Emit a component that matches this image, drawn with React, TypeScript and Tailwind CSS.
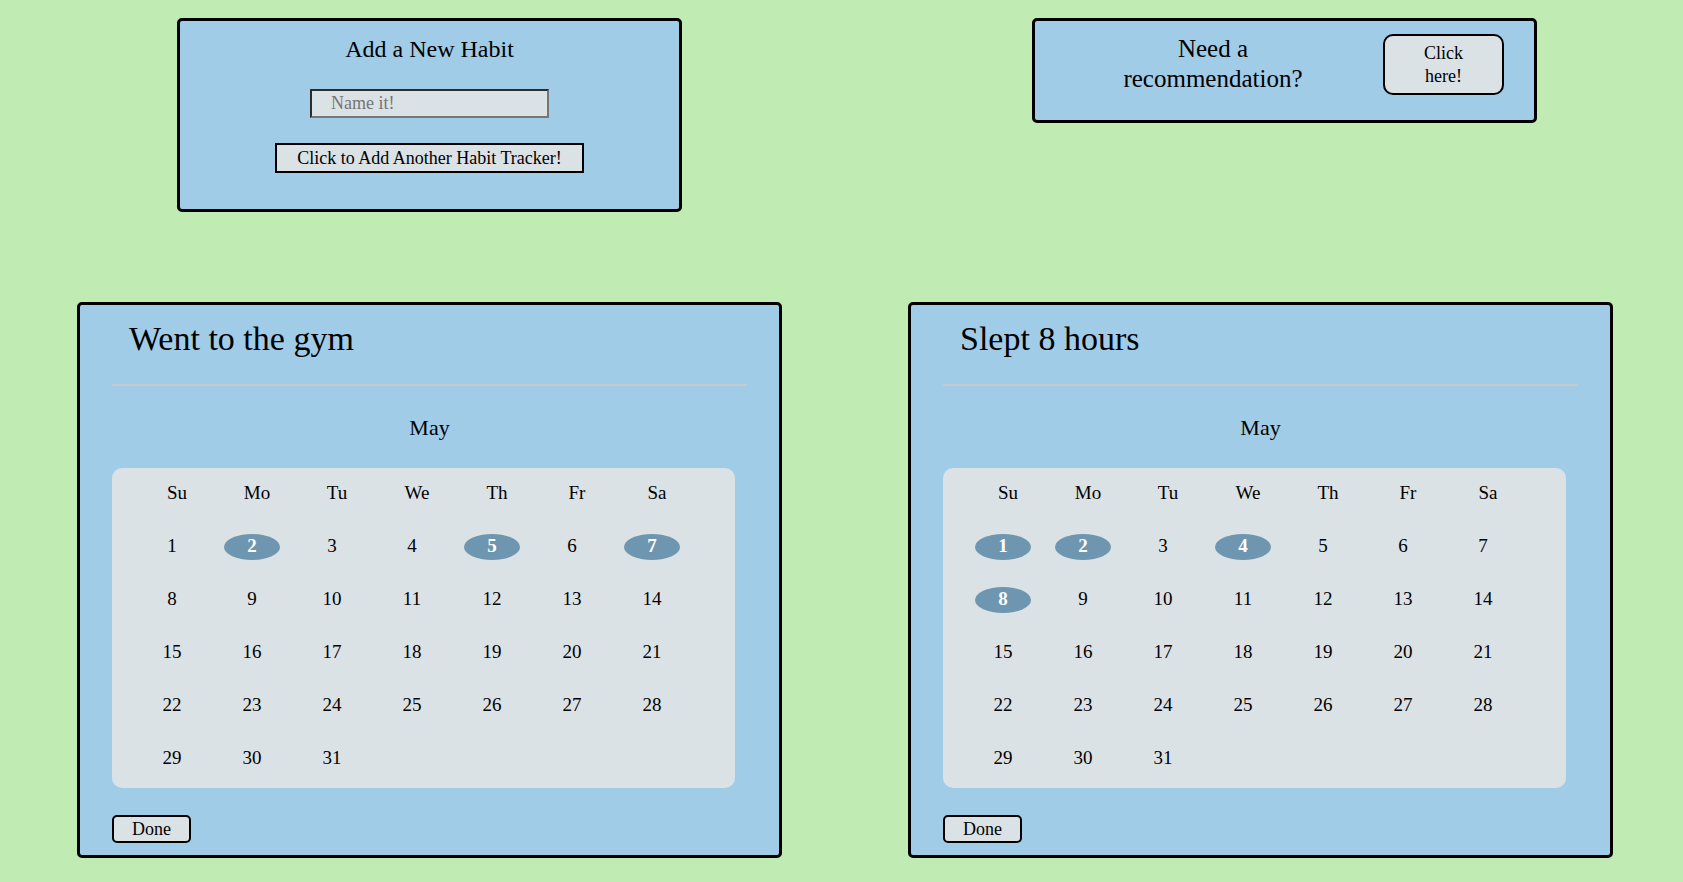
import React from "react";

type Habit = { title: string; done: number[] };

const habits: Habit[] = [
  { title: "Went to the gym", done: [2, 5, 7] },
  { title: "Slept 8 hours", done: [1, 2, 4, 8] },
];

const weekdays = ["Su", "Mo", "Tu", "We", "Th", "Fr", "Sa"];

function MonthGrid({ done }: { done: number[] }) {
  const days = Array.from({ length: 31 }, (_, i) => i + 1);
  return (
    <div className="ml-0 w-[623px] rounded-[10px] bg-[#dbe2e6] pl-[20px] pt-[11px] pb-[3px]">
      <div className="grid grid-cols-[repeat(7,80px)]">
        {weekdays.map((d) => (
          <div
            key={d}
            className="flex h-[28px] items-center justify-center pl-[10px] text-[19px]"
          >
            {d}
          </div>
        ))}
      </div>
      <div className="mt-[13px] grid grid-cols-[repeat(7,80px)]">
        {days.map((n) => {
          const on = done.includes(n);
          return (
            <div key={n} className="flex h-[53px] items-center justify-center">
              {on ? (
                <span className="flex h-[26px] w-[56px] items-center justify-center rounded-[50%] bg-[#6f96b0] text-[19px] font-bold text-white">
                  {n}
                </span>
              ) : (
                <span className="text-[19px]">{n}</span>
              )}
            </div>
          );
        })}
      </div>
    </div>
  );
}

function HabitCard({ habit }: { habit: Habit }) {
  return (
    <div className="flex h-[556px] w-[705px] flex-col rounded-[5px] border-[3px] border-black bg-[#a0cce8] px-[32px] pt-[14px]">
      <h2 className="pl-[17px] text-[34px] leading-[40px]">{habit.title}</h2>
      <div className="mt-[25px] h-[2px] bg-[#c4cace]"></div>
      <div className="mt-[28px] text-center text-[22px] leading-[28px]">May</div>
      <div className="mt-[26px]">
        <MonthGrid done={habit.done} />
      </div>
      <div className="mt-[27px]">
        <button className="h-[28px] w-[79px] rounded-[5px] border-2 border-black bg-[#dbe2e6] text-[18px] leading-none">
          Done
        </button>
      </div>
    </div>
  );
}

export default function App() {
  return (
    <div className="min-h-[882px] w-full bg-[#c0ebb2] font-['Liberation_Serif',serif] text-black">
      <div className="flex items-start pt-[18px]">
        <div className="ml-[177px] flex h-[194px] w-[505px] flex-col items-center rounded-[5px] border-[3px] border-black bg-[#a0cce8] pt-[13px]">
          <h1 className="text-[24px] leading-[30px]">Add a New Habit</h1>
          <input
            placeholder="Name it!"
            className="mt-[25px] h-[29px] w-[239px] border-2 border-t-[#2b2b2b] border-l-[#2b2b2b] border-r-[#767676] border-b-[#767676] bg-[#dbe2e6] pl-[19px] text-[18px] outline-none placeholder:text-[#757575]"
          />
          <button className="mt-[25px] h-[30px] w-[309px] border-2 border-black bg-[#dbe2e6] text-[18px] leading-none">
            Click to Add Another Habit Tracker!
          </button>
        </div>
        <div className="ml-[350px] flex h-[105px] w-[505px] items-start rounded-[5px] border-[3px] border-black bg-[#a0cce8] pt-[13px]">
          <p className="ml-[33px] w-[290px] text-center text-[25px] leading-[30px]">
            Need a
            <br />
            recommendation?
          </p>
          <button className="ml-auto mr-[30px] h-[61px] w-[121px] rounded-[10px] border-2 border-black bg-[#dbe2e6] text-[18px] leading-[23px]">
            Click
            <br />
            here!
          </button>
        </div>
      </div>
      <div className="mt-[90px] flex gap-[126px] pl-[77px]">
        {habits.map((h) => (
          <HabitCard key={h.title} habit={h} />
        ))}
      </div>
    </div>
  );
}
